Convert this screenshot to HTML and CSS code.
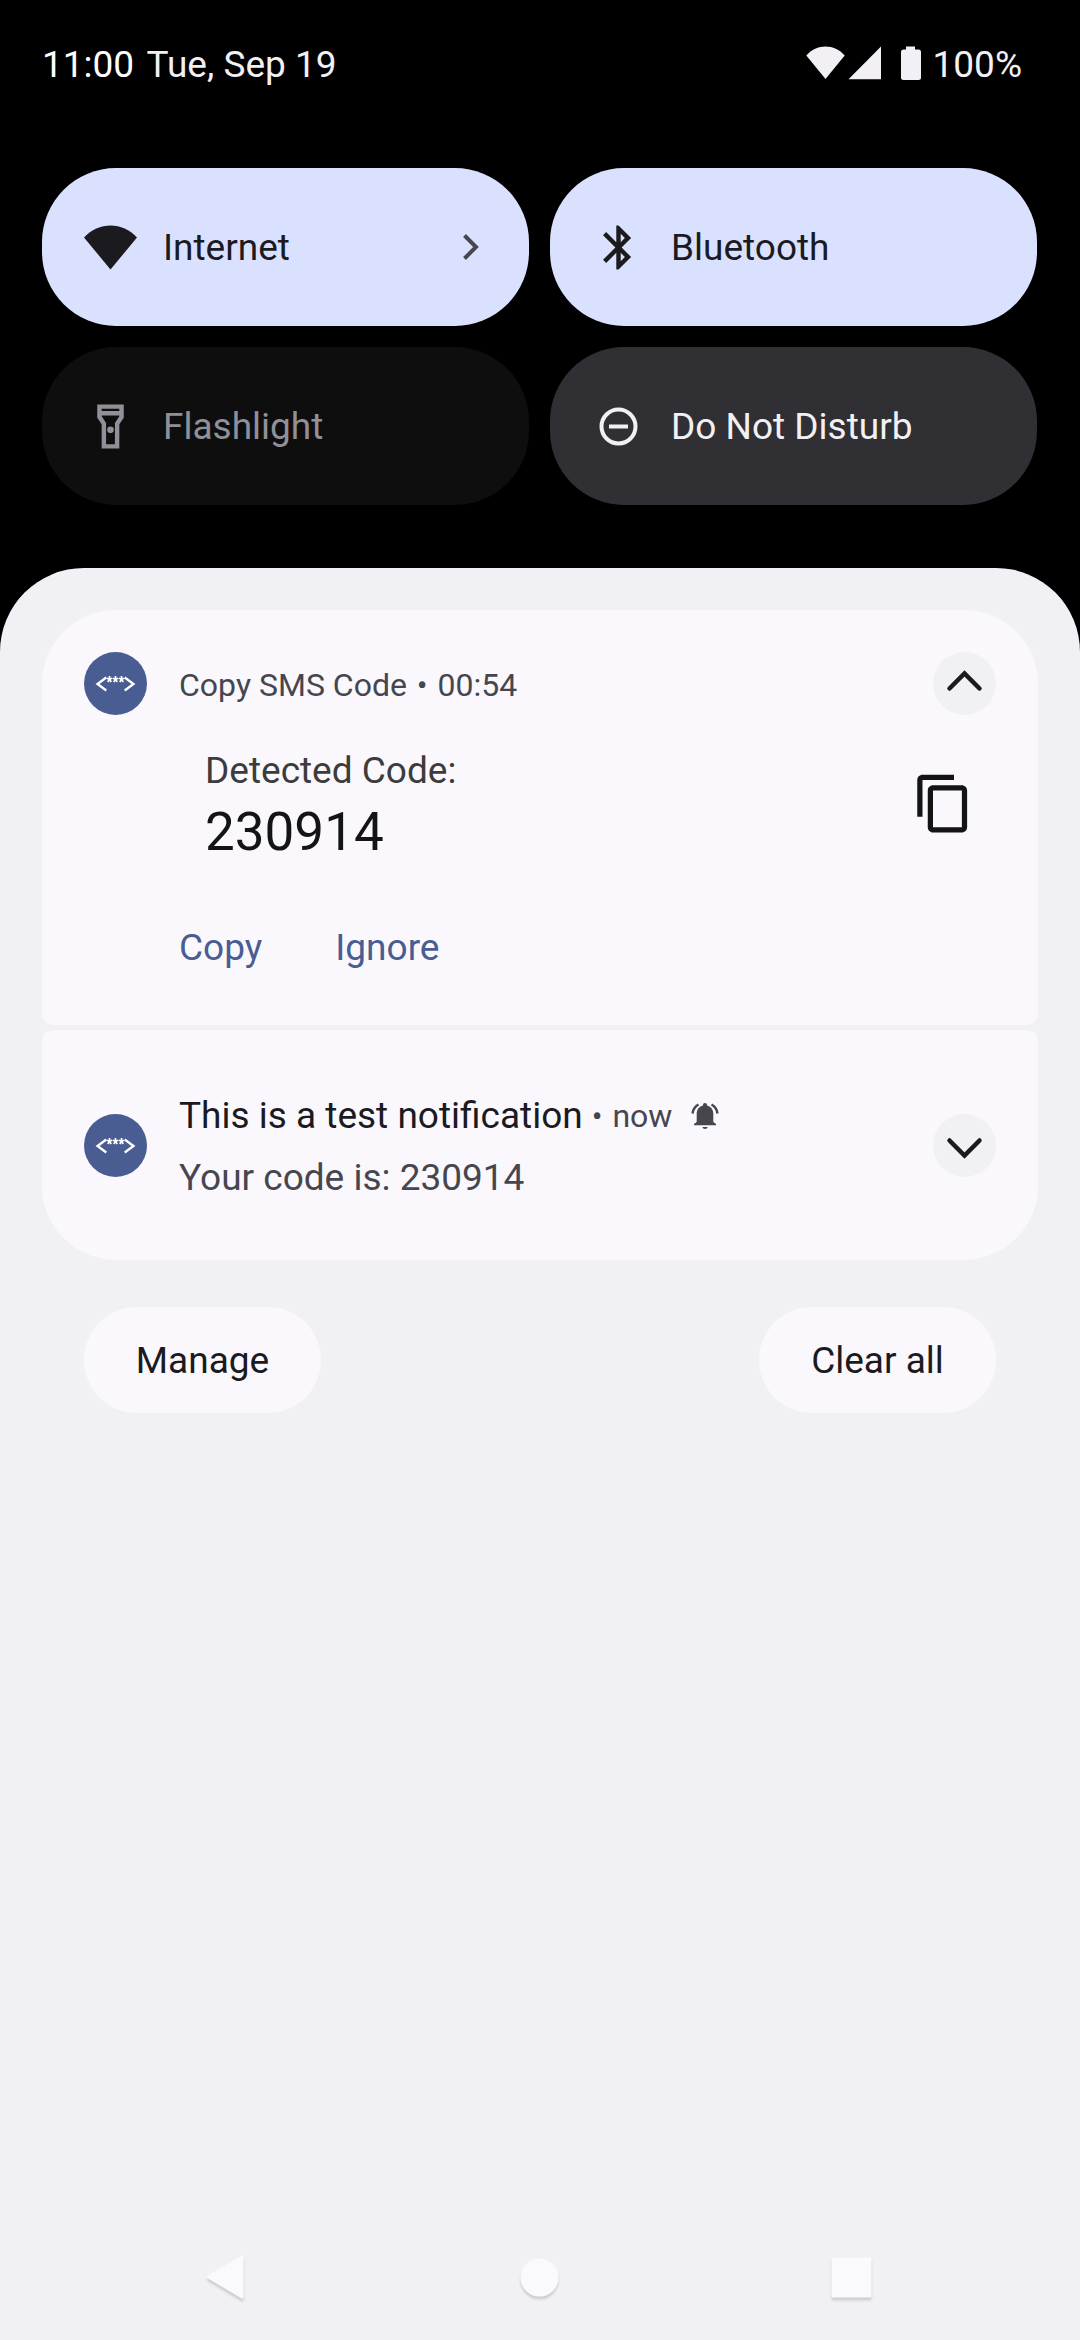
FILE: index.html
```html
<!DOCTYPE html>
<html lang="en">
<head>
<meta charset="utf-8">
<meta name="viewport" content="width=device-width, initial-scale=1">
<title>Notifications</title>
<link rel="stylesheet" href="styles.css">
</head>
<body class="screen">
<svg class="sprite" aria-hidden="true">
  <symbol id="app-code" viewBox="0 0 63 63">
    <g fill="none" stroke="#fff" stroke-width="2.300">
      <path d="M22.300 25.500L13.500 32l8.800 6.500M40.700 25.500l8.800 6.500-8.800 6.500"/>
      <path stroke-width="1.700" d="M25.500 24v3.200M22.800 26.300l2.700.9 2.700-.9M23.800 30l1.700-2.800 1.700 2.800M31.500 24v3.200M28.800 26.300l2.700.9 2.700-.9M29.800 30l1.700-2.800 1.700 2.800M37.500 24v3.200M34.800 26.300l2.700.9 2.700-.9M35.800 30l1.700-2.800 1.700 2.800"/>
    </g>
  </symbol>
</svg>

<header class="status">
  <p class="status-clock"><time class="clock">11:00</time> Tue, Sep 19</p>
  <div class="status-icons">
    <svg class="status-glyphs" viewBox="0 0 115 36" fill="currentColor" aria-hidden="true">
      <path d="M0.300 9.500C10.500-2.500 28.500-2.500 38.700 9.500L19.500 33z"/>
      <path d="M42.500 33.200L75 0.500v32.700z"/>
      <path d="M100 0.500h9v3h3.500q2.500 0 2.500 2.500v25.500q0 2.500-2.500 2.500h-15q-2.500 0-2.500-2.500V6q0-2.500 2.500-2.500h2.500z"/>
    </svg>
    <span>100%</span>
  </div>
</header>

<section class="tiles" aria-label="Quick settings">
  <button class="tile tile-on" type="button">
    <svg class="tile-icon" viewBox="0 0 53 53" fill="currentColor" aria-hidden="true"><path d="M0 16.500C14.500 0.500 38.500 0.500 53 16.500L26.500 48.500z"/></svg>
    <span class="tile-label">Internet</span>
    <svg class="tile-chevron" viewBox="0 0 16 26" fill="none" stroke="currentColor" stroke-width="4" aria-hidden="true"><path d="M1.500 1.500L13 13 1.500 24.500"/></svg>
  </button>
  <button class="tile tile-on" type="button">
    <svg class="tile-icon" viewBox="0 0 24 24" fill="currentColor" aria-hidden="true"><path d="M17.710 7.710L12 2h-1v7.590L6.410 5 5 6.410 10.590 12 5 17.590 6.410 19 11 14.410V22h1l5.710-5.710-4.300-4.290 4.300-4.290zM13 5.830l1.880 1.880L13 9.590V5.830zm1.880 10.460L13 18.170v-3.760l1.880 1.880z"/></svg>
    <span class="tile-label">Bluetooth</span>
  </button>
  <button class="tile tile-unavailable" type="button">
    <svg class="tile-icon" viewBox="0 0 24 24" fill="currentColor" aria-hidden="true"><path fill-rule="evenodd" d="M18 2H6v6l2 3v11h8V11l2-3V2zm-2 2v1H8V4h8zm-2 6.400V20h-4v-9.600L8 7.400V7h8v.4l-2 3z"/><circle cx="12" cy="13.500" r="1.500"/></svg>
    <span class="tile-label">Flashlight</span>
  </button>
  <button class="tile tile-off" type="button">
    <svg class="tile-icon" viewBox="0 0 53 53" fill="none" stroke="currentColor" stroke-width="4" aria-hidden="true"><circle cx="26.500" cy="26.500" r="17"/><path d="M17 26.500h19"/></svg>
    <span class="tile-label">Do Not Disturb</span>
  </button>
</section>

<main class="shade">
  <article class="card card-first">
    <span class="app-icon"><svg viewBox="0 0 63 63" aria-hidden="true"><use href="#app-code"/></svg></span>
    <div class="card-body">
      <p class="card-meta">Copy SMS Code <span class="dot">•</span> <time>00:54</time></p>
      <div class="code">
        <div class="code-text">
          <h2 class="code-label">Detected Code:</h2>
          <p class="code-value">230914</p>
        </div>
        <button class="copy" type="button" aria-label="Copy code">
          <svg viewBox="0 0 24 24" fill="currentColor" aria-hidden="true"><path d="M16 1H4c-1.100 0-2 .9-2 2v14h2V3h12V1zm3 4H8c-1.100 0-2 .9-2 2v14c0 1.100.9 2 2 2h11c1.100 0 2-.9 2-2V7c0-1.100-.9-2-2-2zm0 16H8V7h11v14z"/></svg>
        </button>
      </div>
      <div class="actions">
        <button class="action" type="button">Copy</button>
        <button class="action" type="button">Ignore</button>
      </div>
    </div>
    <button class="expand" type="button" aria-label="Collapse">
      <svg viewBox="0 0 63 63" fill="none" stroke="currentColor" stroke-width="4.500" stroke-linecap="round" aria-hidden="true"><path d="M16.500 36.500l15-15 15 15"/></svg>
    </button>
  </article>

  <article class="card card-last">
    <span class="app-icon"><svg viewBox="0 0 63 63" aria-hidden="true"><use href="#app-code"/></svg></span>
    <div class="card-body">
      <div class="title-row">
        <h2 class="title">This is a test notification</h2>
        <span class="when"><span class="dot">•</span> now</span>
        <svg class="bell" viewBox="0 0 28 28" aria-hidden="true">
          <path fill="currentColor" d="M14 1c1.300 0 2 .8 2 2v.5c4.200 1 6.300 4.300 6.300 8.500v8l2.700 2v1.300H3V22l2.700-2v-8c0-4.200 2.100-7.500 6.300-8.500V3c0-1.200.7-2 2-2zM11.300 25h5.400c-.5 1.300-1.300 2-2.700 2s-2.200-.7-2.700-2z"/>
          <path fill="none" stroke="currentColor" stroke-width="2.400" d="M7.500 2.500C4 4.500 2 7.500 1.500 11.500M20.500 2.500c3.500 2 5.500 5 6 9"/>
        </svg>
      </div>
      <p class="text">Your code is: 230914</p>
    </div>
    <button class="expand" type="button" aria-label="Expand">
      <svg viewBox="0 0 63 63" fill="none" stroke="currentColor" stroke-width="4.500" stroke-linecap="round" aria-hidden="true"><path d="M16.500 26.500l15 15 15-15"/></svg>
    </button>
  </article>

  <div class="footer">
    <button class="pill" type="button">Manage</button>
    <button class="pill" type="button">Clear all</button>
  </div>

  <nav class="nav" aria-label="System navigation">
    <button class="nav-button" type="button" aria-label="Back"><svg viewBox="0 0 63 63" aria-hidden="true"><path d="M45 11v40L11.500 31z"/></svg></button>
    <button class="nav-button" type="button" aria-label="Home"><svg viewBox="0 0 63 63" aria-hidden="true"><circle cx="31.500" cy="31.500" r="17.500"/></svg></button>
    <button class="nav-button" type="button" aria-label="Recent apps"><svg viewBox="0 0 63 63" aria-hidden="true"><path d="M13 13h37v37H13z"/></svg></button>
  </nav>
</main>
</body>
</html>
```
FILE: styles.css
```css
* {
  box-sizing: border-box;
  margin: 0;
  padding: 0;
}

.screen {
  display: flex;
  flex-direction: column;
  min-height: 100vh;
  background: #000;
  color: #1b1b1f;
  font: 400 37px/62px Roboto, sans-serif;
}

button {
  border: 0;
  background: none;
  color: inherit;
  font: inherit;
}

h2 {
  font: inherit;
}

svg {
  display: block;
}

.sprite {
  display: none;
}

/* Status bar */
.status {
  display: flex;
  justify-content: space-between;
  padding: 34px 58px 32px 42px;
  color: #f2f0f5;
}

.clock {
  margin-right: 4px;
  color: #fff;
}

.status-icons {
  display: flex;
  gap: 12px;
}

.status-glyphs {
  width: 115px;
  height: 36px;
  margin-top: 12px;
}

/* Quick settings */
.tiles {
  display: grid;
  grid-template-columns: 1fr 1fr;
  gap: 21px;
  padding: 40px 43px 63px 42px;
}

.tile {
  display: flex;
  align-items: center;
  gap: 26px;
  height: 158px;
  padding: 0 50px 0 42px;
  border-radius: 74px;
  text-align: left;
}

.tile-on {
  background: #dae1ff;
}

.tile-off {
  background: #303034;
  color: #f2f0f5;
}

.tile-unavailable {
  background: #0e0e0e;
  color: #909099;
}

.tile-icon {
  width: 53px;
  height: 53px;
}

.tile-label {
  flex: 1;
  padding-top: 2px;
}

.tile-chevron {
  width: 16px;
  height: 26px;
  color: #46464f;
}

/* Notification shade */
.shade {
  display: flex;
  flex: 1;
  flex-direction: column;
  padding: 42px 42px 0;
  border-radius: 84px 84px 0 0;
  background: #f1f0f5;
}

.card {
  display: flex;
  padding: 42px;
  background: #faf8fd;
}

.card-first {
  margin-bottom: 5px;
  padding-bottom: 15px;
  border-radius: 74px 74px 11px 11px;
}

.card-last {
  align-items: center;
  padding-top: 51px;
  padding-bottom: 51px;
  border-radius: 11px 11px 74px 74px;
}

.card-last .card-body {
  padding-top: 4px;
}

.app-icon {
  width: 63px;
  height: 63px;
  margin-right: 32px;
  border-radius: 50%;
  background: #495d92;
}

.card-body {
  flex: 1;
}

.card-meta {
  color: #46464f;
  font-size: 32px;
  line-height: 66px;
}

.dot {
  margin: 0 2px;
}

.code {
  display: flex;
  align-items: center;
  justify-content: space-between;
  margin: 30px -42px 22px 26px;
}

.code-label {
  margin-bottom: 8px;
  color: #3c3c3c;
  line-height: 46px;
}

.code-value {
  color: #141414;
  font-size: 53px;
  line-height: 60px;
}

.copy {
  width: 63px;
  height: 63px;
  margin-bottom: 4px;
  color: #141414;
}

.actions {
  display: flex;
  gap: 73px;
}

.action {
  height: 126px;
  padding-top: 2px;
  color: #495d92;
}

.expand {
  width: 63px;
  height: 63px;
  border-radius: 50%;
  background: #f1f0f5;
}

.title-row {
  display: flex;
  align-items: center;
}

.when {
  margin: 0 19px 0 7px;
  color: #46464f;
  font-size: 32px;
}

.bell {
  width: 28px;
  height: 28px;
  color: #46464f;
}

.text {
  color: #46464f;
}

.footer {
  display: flex;
  justify-content: space-between;
  padding: 47px 42px;
}

.pill {
  min-width: 237px;
  height: 106px;
  padding-top: 2px;
  border-radius: 53px;
  background: #faf8fd;
}

/* System navigation */
.nav {
  display: grid;
  grid-template-columns: repeat(3, 1fr);
  justify-items: center;
  margin-top: auto;
  padding: 31px;
}

.nav-button {
  width: 63px;
  height: 63px;
  filter: drop-shadow(0 3px 1px rgba(0, 0, 0, 0.14));
}

.nav-button path,
.nav-button circle {
  fill: #fafafc;
  stroke: #fafafc;
  stroke-width: 3px;
  stroke-linejoin: round;
}
```
